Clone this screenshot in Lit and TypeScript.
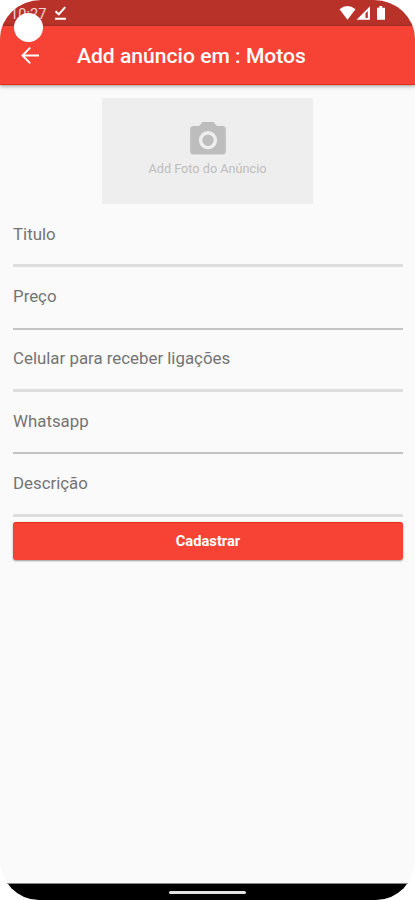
import { LitElement, html, css } from "lit";
import { customElement, property } from "lit/decorators.js";

@customElement("form-field")
class FormField extends LitElement {
  @property() label = "";
  @property({ type: Boolean, reflect: true }) soft = false;
  static styles = css`
    :host { display: block; height: 62.35px; box-sizing: border-box; padding-top: 19.3px; color: #747474; font-size: 16.85px; line-height: 20px; }
    .line { height: 2px; margin-top: 21.4px; background: #c3c3c3; }
    :host([soft]) .line { height: 3px; margin-top: 20.7px; background: #dedede; }
  `;
  render() {
    return html`<div class="label">${this.label}</div><div class="line"></div>`;
  }
}

@customElement("app-root")
class AppRoot extends LitElement {
  static styles = css`
    :host { display: block; width: 415px; height: 900px; background: #fff; font-family: Roboto, "Liberation Sans", sans-serif; }
    * { box-sizing: border-box; }
    .screen { position: relative; display: flex; flex-direction: column; width: 415px; height: 900px; overflow: hidden; background: #fafafa; border-radius: 41px 41px 39px 39px / 39px 39px 40px 40px; }
    .status { height: 26px; flex: none; background: #b9322a; display: flex; align-items: flex-start; padding: 5px 28px 0 10px; color: #fff; }
    .time { font-size: 14.6px; line-height: 18px; width: 44px; white-space: nowrap; color: #f3d5d2; }
    .status svg { display: block; flex: none; }
    .grow { flex: 1; }
    .camera { position: absolute; left: 14px; top: 13px; width: 29px; height: 29px; border-radius: 50%; background: #fff; }
    .bar { height: 59px; flex: none; background: #f64336; display: flex; align-items: center; padding-left: 20px; color: #fff; border-bottom: 1px solid #e62b17; box-shadow: 0 1px 4px rgba(0,0,0,.42); }
    .back { display: block; width: 20px; height: 20px; margin-right: 37px; }
    .title { font-size: 21.1px; font-weight: 500; line-height: 26px; padding-top: 2px; white-space: nowrap; }
    .body { flex: 1; padding: 13px 12px 0 13px; }
    .photo { width: 211px; height: 106px; margin: 0 auto 0 89px; background: #eee; color: #bdbdbd; display: flex; flex-direction: column; align-items: center; padding-top: 24px; }
    .photo svg { display: block; }
    .photo span { font-size: 12.7px; line-height: 16px; margin-top: 6px; white-space: nowrap; }
    .button { display: flex; align-items: center; justify-content: center; height: 38px; margin-top: 6px; padding-bottom: 1px; border-radius: 3px; background: #f64336; border-top: 1px solid #e62b17; color: #fff; font-size: 14.7px; font-weight: 700; box-shadow: 0 1px 2px rgba(0,0,0,.38); }
    .nav { flex: none; height: 17px; background: #000; border-top: 1px solid #888; display: flex; justify-content: center; padding-top: 7px; }
    .handle { width: 77px; height: 3px; border-radius: 2px; background: #e3e3e3; }
    .fields { padding-top: 0.5px; }
  `;

  render() {
    return html`
      <div class="screen">
        <div class="status">
          <span class="time">10:27</span>
          <svg width="14" height="16" viewBox="0 0 14 16" fill="none" stroke="#fff" stroke-width="2"><path d="M1.500 6.200 4.800 9.300 11.200 2.200M1 13.800H12"/></svg>
          <span class="grow"></span>
          <svg width="49" height="17" viewBox="0 0 49 17" fill="#fff">
            <path d="M1.500 4.200Q9.500-2.400 17.500 4.200L9.500 14.700Z"/>
            <path fill-rule="evenodd" d="M18.500 14.700 32 1.300V14.700ZM27.500 8.300V13H29.800V6Z"/>
            <path d="M39 2.700H41.300V.9H44.200V2.700H47V14.800H39Z"/>
          </svg>
        </div>
        <div class="bar">
          <svg class="back" viewBox="0 0 20 20" fill="none" stroke="#fff" stroke-width="1.9"><path d="M19 10.500H2.800M10.200 2.700 2.500 10.500 10.200 18.300"/></svg>
          <span class="title">Add anúncio em : Motos</span>
        </div>
        <div class="camera"></div>
        <div class="body">
          <div class="photo">
            <svg width="36" height="33" viewBox="0 0 36 33"><path fill="currentColor" d="M12.500 0h11l3.300 4H32.500a3.300 3.300 0 0 1 3.300 3.300v21.900a3.300 3.300 0 0 1-3.300 3.300H3.500A3.300 3.300 0 0 1 .2 29.200V7.300A3.300 3.300 0 0 1 3.500 4h5.700Z"/><circle cx="18" cy="18.200" r="7.400" fill="currentColor" stroke="#eee" stroke-width="3.400"/></svg>
            <span>Add Foto do Anúncio</span>
          </div>
          <div class="fields">
            <form-field soft label="Titulo"></form-field>
            <form-field label="Preço"></form-field>
            <form-field soft label="Celular para receber ligações"></form-field>
            <form-field label="Whatsapp"></form-field>
            <form-field soft label="Descrição"></form-field>
          </div>
          <div class="button">Cadastrar</div>
        </div>
        <div class="nav"><div class="handle"></div></div>
      </div>
    `;
  }
}
